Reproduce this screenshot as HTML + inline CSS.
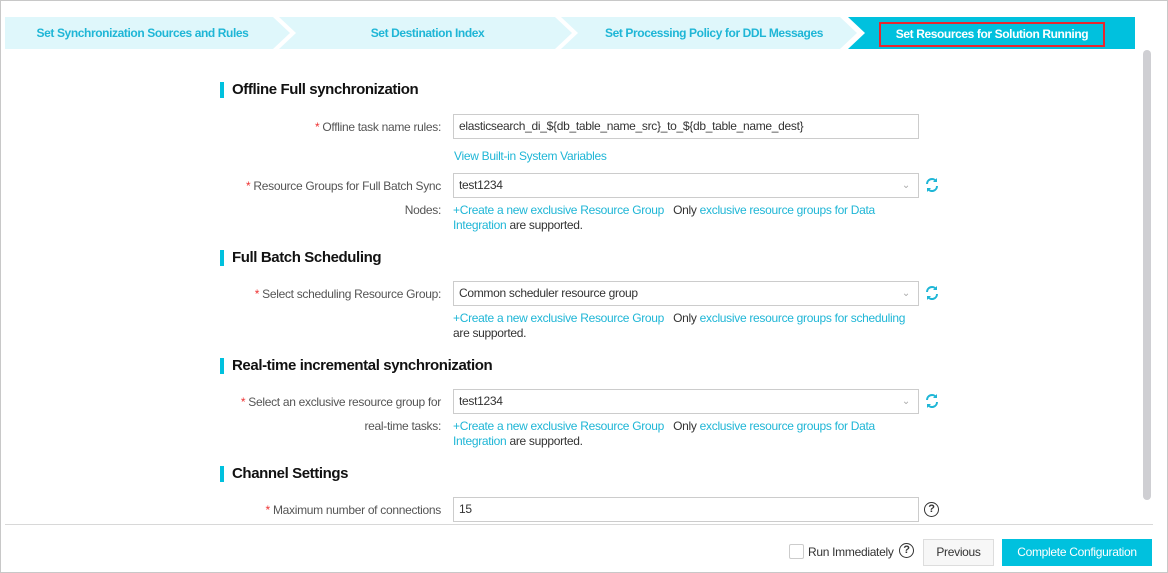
<!DOCTYPE html>
<html><head><meta charset="utf-8"><style>
*{margin:0;padding:0;box-sizing:border-box}
body{width:1168px;height:573px;overflow:hidden;background:#fff;font-family:"Liberation Sans",sans-serif;font-size:12px;letter-spacing:-0.3px;color:#333;position:relative}
.frame{position:absolute;left:0;top:0;width:1168px;height:573px;border:1px solid #c8c8c8}
.a{position:absolute;white-space:nowrap}
.step{position:absolute;top:17px;height:32px;line-height:32px;font-weight:bold;color:#1fb6d6;text-align:center;font-size:12px;letter-spacing:-0.4px}
.h{position:absolute;left:220px;font-size:15px;font-weight:bold;color:#111;padding-left:12px;line-height:16px;letter-spacing:-0.4px}
.h:before{content:"";position:absolute;left:0;top:0;width:4px;height:16px;background:#00c1de}
.lab{position:absolute;right:727px;text-align:right;color:#555;white-space:nowrap}
.lab b{color:#e33;font-weight:normal}
.in{position:absolute;left:453px;width:466px;height:25px;border:1px solid #ccc;line-height:23px;padding-left:5px;color:#333}
.car{position:absolute;right:8px;top:0;color:#aaa;font-size:10px}
.lk{color:#1fb6d6}
.ref{position:absolute;left:924px;width:16px;height:16px}
</style></head><body>
<div class="frame"></div>
<svg class="a" style="left:5px;top:17px" width="1130" height="32">
<polygon points="0,0 268,0 285,16 268,32 0,32" fill="#dff7fb"/>
<polygon points="274,0 550,0 567,16 550,32 274,32 291,16" fill="#dff7fb"/>
<polygon points="556,0 835,0 852,16 835,32 556,32 573,16" fill="#dff7fb"/>
<polygon points="843,0 1130,0 1130,32 843,32 860,16" fill="#00c1de"/>
</svg>
<div class="step" style="left:5px;width:275px">Set Synchronization Sources and Rules</div>
<div class="step" style="left:290px;width:275px">Set Destination Index</div>
<div class="step" style="left:575px;width:278px">Set Processing Policy for DDL Messages</div>
<div class="step" style="left:879px;width:226px;top:22px;height:25px;line-height:21px;color:#fff;border:2px solid #e8262e">Set Resources for Solution Running</div>
<div class="a" style="left:1143px;top:50px;width:8px;height:450px;background:#cfcfd3;border-radius:4px"></div>

<div class="h" style="top:82px">Offline Full synchronization</div>
<div class="lab" style="top:120px"><b>*</b> Offline task name rules:</div>
<div class="in" style="top:114px">elasticsearch_di_${db_table_name_src}_to_${db_table_name_dest}</div>
<div class="a lk" style="left:454px;top:149px">View Built-in System Variables</div>
<div class="lab" style="top:179px"><b>*</b> Resource Groups for Full Batch Sync</div>
<div class="in" style="top:173px">test1234<span class="car">&#8964;</span></div>
<div class="lab" style="top:203px">Nodes:</div>
<div class="a" style="left:453px;top:203px"><span class="lk">+Create a new exclusive Resource Group</span>&nbsp;&nbsp; Only <span class="lk">exclusive resource groups for Data</span></div>
<div class="a" style="left:453px;top:218px"><span class="lk">Integration</span> are supported.</div>

<div class="h" style="top:250px">Full Batch Scheduling</div>
<div class="lab" style="top:287px"><b>*</b> Select scheduling Resource Group:</div>
<div class="in" style="top:281px">Common scheduler resource group<span class="car">&#8964;</span></div>
<div class="a" style="left:453px;top:311px"><span class="lk">+Create a new exclusive Resource Group</span>&nbsp;&nbsp; Only <span class="lk">exclusive resource groups for scheduling</span></div>
<div class="a" style="left:453px;top:326px">are supported.</div>

<div class="h" style="top:358px">Real-time incremental synchronization</div>
<div class="lab" style="top:395px"><b>*</b> Select an exclusive resource group for</div>
<div class="in" style="top:389px">test1234<span class="car">&#8964;</span></div>
<div class="lab" style="top:419px">real-time tasks:</div>
<div class="a" style="left:453px;top:419px"><span class="lk">+Create a new exclusive Resource Group</span>&nbsp;&nbsp; Only <span class="lk">exclusive resource groups for Data</span></div>
<div class="a" style="left:453px;top:434px"><span class="lk">Integration</span> are supported.</div>

<div class="h" style="top:466px">Channel Settings</div>
<div class="lab" style="top:503px"><b>*</b> Maximum number of connections</div>
<div class="in" style="top:497px">15</div>

<svg class="ref" style="top:177px" viewBox="0 0 16 16"><path d="M3 7a5 5 0 0 1 9-3M13 9a5 5 0 0 1-9 3" fill="none" stroke="#1fb6d6" stroke-width="2"/><path d="M13 1v4h-4z M3 15v-4h4z" fill="#1fb6d6"/></svg>
<svg class="ref" style="top:285px" viewBox="0 0 16 16"><path d="M3 7a5 5 0 0 1 9-3M13 9a5 5 0 0 1-9 3" fill="none" stroke="#1fb6d6" stroke-width="2"/><path d="M13 1v4h-4z M3 15v-4h4z" fill="#1fb6d6"/></svg>
<svg class="ref" style="top:393px" viewBox="0 0 16 16"><path d="M3 7a5 5 0 0 1 9-3M13 9a5 5 0 0 1-9 3" fill="none" stroke="#1fb6d6" stroke-width="2"/><path d="M13 1v4h-4z M3 15v-4h4z" fill="#1fb6d6"/></svg>
<div class="a" style="left:924px;top:502px;width:15px;height:15px;border:1.3px solid #333;border-radius:50%;text-align:center;line-height:13px;font-size:11px;font-weight:bold">?</div>

<div class="a" style="left:5px;top:524px;width:1148px;height:1px;background:#d8d8d8"></div>
<div class="a" style="left:789px;top:544px;width:15px;height:15px;border:1px solid #ccc;border-radius:2px"></div>
<div class="a" style="left:808px;top:545px;color:#333">Run Immediately</div>
<div class="a" style="left:899px;top:543px;width:15px;height:15px;border:1.3px solid #333;border-radius:50%;text-align:center;line-height:13px;font-size:11px;font-weight:bold">?</div>
<div class="a" style="left:923px;top:539px;width:71px;height:27px;border:1px solid #ddd;background:#f7f7f7;text-align:center;line-height:25px;color:#333">Previous</div>
<div class="a" style="left:1002px;top:539px;width:150px;height:27px;background:#00c1de;color:#fff;text-align:center;line-height:27px">Complete Configuration</div>
</body></html>
